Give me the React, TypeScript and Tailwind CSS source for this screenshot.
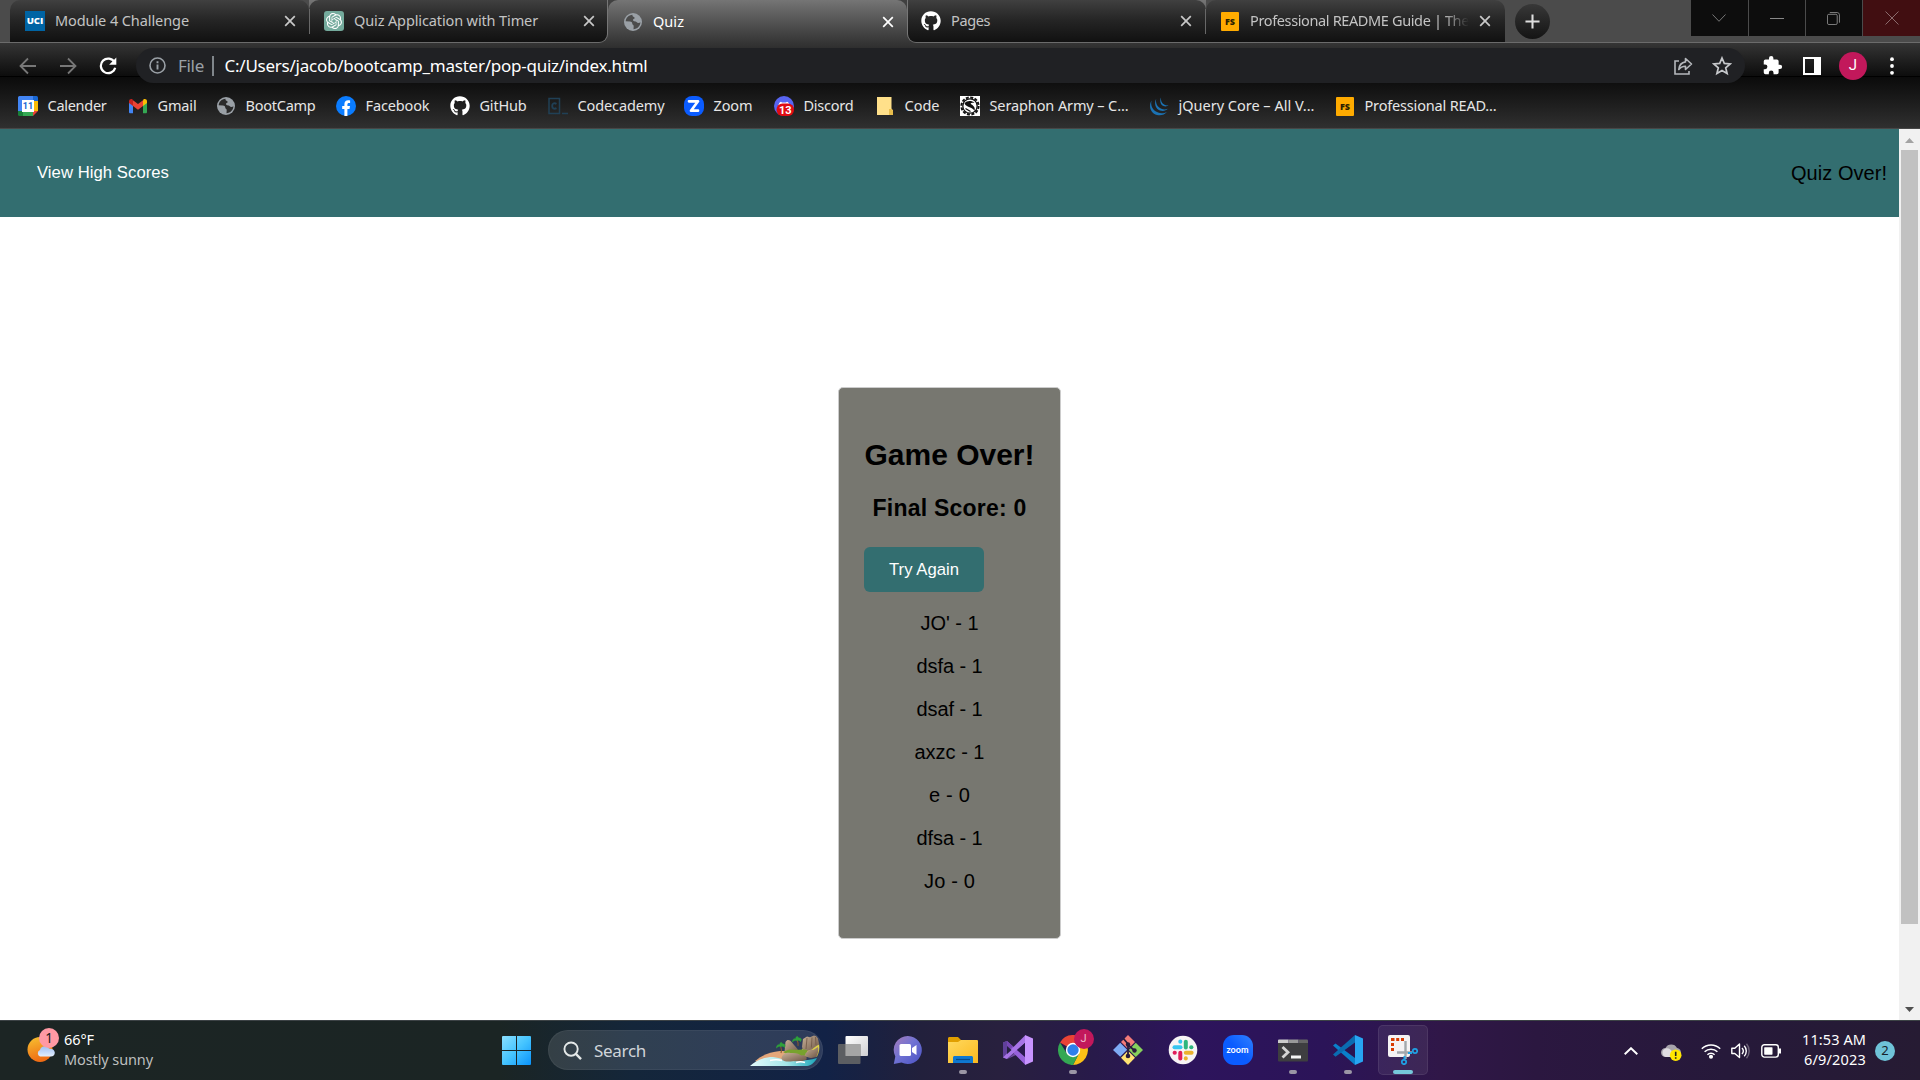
import React, { useLayoutEffect, useRef, useState } from "react";
import { FaGithub } from "react-icons/fa";
import { SiOpenai } from "react-icons/si";

/* Single line of text whose tracking is adjusted so that it spans `w` pixels. */
function Fit({ w, className = "", children }: { w: number; className?: string; children: string }) {
  const ref = useRef<HTMLSpanElement>(null);
  const [spacing, setSpacing] = useState(0);
  useLayoutEffect(() => {
    if (ref.current) {
      const natural = ref.current.getBoundingClientRect().width;
      setSpacing((w - natural) / children.length);
    }
  }, [w, children]);
  return (
    <span ref={ref} className={`inline-block shrink-0 whitespace-nowrap ${className}`} style={{ letterSpacing: spacing }}>
      {children}
    </span>
  );
}

/* ---------- Favicons ---------- */

const Globe = ({ land = "#2b2b2b" }: { land?: string }) => (
  <svg viewBox="0 0 20 20" className="h-5 w-5 shrink-0">
    <circle cx="10" cy="10" r="9" fill="#9aa0a6" />
    <path d="M9.500 2.700C5.500 2.900 2.800 6 2.700 9.300L7 9.500c1.300 0 2.200.8 2.300 2.200.1 1.200 1.300 1 1.400 2.300l-.2 3.300c3.800-.2 6.800-3.300 6.900-7-1.200.9-3 .8-3.900-.3-.7-.8-2-.3-2.900-1-.9-.8-.6-2 .5-2.300 1.300-.3.400-1.700-.6-2-.8-.3-1.200-1-1-2z" fill={land} />
  </svg>
);

const Uci = () => (
  <div className="flex h-5 w-5 shrink-0 items-center justify-center bg-[#0064a4] font-['Open_Sans',sans-serif] text-[9.500px] font-extrabold leading-none text-white">UCI</div>
);

const OpenAi = () => (
  <div className="flex h-5 w-5 shrink-0 items-center justify-center rounded-[3px] bg-[#74aa9c] text-white">
    <SiOpenai size={16} />
  </div>
);

const Octo = () => <FaGithub className="h-5 w-5 shrink-0 text-white" />;

const Fs = () => (
  <div className="flex h-5 w-5 shrink-0 items-center justify-center">
    <div className="flex h-[19px] w-[18px] items-center justify-center rounded-[1px] bg-[#ffab00] font-['Open_Sans',sans-serif] text-[9px] font-extrabold leading-none text-[#2b2100]">FS</div>
  </div>
);

const Calendar = () => (
  <svg viewBox="0 0 20 20" className="h-5 w-5 shrink-0">
    <path d="M1.500 0H15v5H5v10H0V1.500A1.500 1.500 0 0 1 1.500 0z" fill="#4285f4" />
    <path d="M15 0h3.500A1.500 1.500 0 0 1 20 1.500V5h-5z" fill="#1967d2" />
    <path d="M15 5h5v10h-5z" fill="#fbbc04" />
    <path d="M5 15h10v5H5z" fill="#34a853" />
    <path d="M0 15h5v5H1.500A1.500 1.500 0 0 1 0 18.500z" fill="#188038" />
    <path d="M15 15h5l-5 5z" fill="#ea4335" />
    <path d="M4 4H16V16H4z" fill="#fff" />
    <text x="10" y="13.400" textAnchor="middle" fontSize="9" fontWeight="700" fontFamily="Roboto" fill="#1967d2">11</text>
  </svg>
);

const Gmail = () => (
  <svg viewBox="0 0 20 20" className="h-5 w-5 shrink-0">
    <path d="M1 5v11c0 .8.500 1.300 1.300 1.300H5V8z" fill="#4285f4" />
    <path d="M19 5v11c0 .8-.5 1.300-1.300 1.300H15V8z" fill="#34a853" />
    <path d="M15 4.600V10l4-3V5.200c0-1.900-2.100-2.900-3.600-1.800z" fill="#fbbc04" />
    <path d="M5 4.600V10l-4-3V5.200c0-1.900 2.100-2.900 3.600-1.800z" fill="#c5221f" />
    <path d="M5 10V4.300L10 8l5-3.700V10l-5 3.800z" fill="#ea4335" />
  </svg>
);

const Facebook = () => (
  <svg viewBox="0 0 20 20" className="h-5 w-5 shrink-0">
    <circle cx="10" cy="10" r="10" fill="#0a7cff" />
    <path d="M8.400 20v-6.900H6.200v-3h2.200V8.300c0-2.700 1.500-4.100 3.700-4.100.7 0 1.500.1 2 .2v2.500h-1.200c-1.100 0-1.500.7-1.500 1.400v1.800h2.600l-.5 3h-2.100V20z" fill="#fff" />
  </svg>
);

const Codecademy = () => (
  <svg viewBox="0 0 20 20" className="h-5 w-5 shrink-0" fill="none" stroke="#204056" strokeWidth="1.500">
    <path d="M1 2.500h10.500v15H1z" />
    <path d="M8.500 7.800c-2.600-1.400-4.300 0-4.300 2.200s1.700 3.600 4.300 2.200" strokeWidth="1.900" />
    <path d="M14 17.500h6" />
  </svg>
);

const ZoomZ = () => (
  <svg viewBox="0 0 20 20" className="h-5 w-5 shrink-0">
    <rect width="20" height="20" rx="8" fill="#0b5cff" />
    <path d="M5.500 5.300h9L7.500 14.700h7" transform="translate(-.5 0)" fill="none" stroke="#fff" strokeWidth="2.700" strokeLinejoin="round" strokeLinecap="round" />
  </svg>
);

const Discord = () => (
  <svg viewBox="0 0 20 20" className="h-5 w-5 shrink-0">
    <circle cx="10" cy="10" r="10" fill="#5865f2" />
    <path d="M4 12c.3-3.500 1.500-6 3-6.200l1 .8h4l1-.8c1.500.2 2.700 2.700 3 6.200z" fill="#fff" />
    <rect x="2.500" y="7.500" width="17.500" height="12.500" rx="6" fill="#e00b12" />
    <text x="11.300" y="17.800" textAnchor="middle" fontSize="11" fontWeight="700" fontFamily="Roboto" fill="#fff">13</text>
  </svg>
);

const CodeFolder = () => (
  <svg viewBox="0 0 20 20" className="h-5 w-5 shrink-0">
    <path d="M2 1h14.500v11.500l1.500 2V19H2z" fill="#ffe08a" />
    <path d="M14 13h2.500l1.500 1.500V19h-4z" fill="#e8bd4c" />
  </svg>
);

const Seraphon = () => (
  <svg viewBox="0 0 20 20" className="h-5 w-5 shrink-0">
    <path d="M0 0h20v20H0z" fill="#fff" />
    <circle cx="10" cy="10" r="8.600" fill="none" stroke="#111" strokeWidth="2" strokeDasharray="3 1.500" />
    <circle cx="10" cy="10" r="7.200" fill="none" stroke="#111" strokeWidth="1.300" />
    <path d="M4.500 7.500C7 4.300 12 4.500 14.500 7c-3-.8-5 0-3 1.500 2.500 1.500 4 3.500 3 6.500-2-3.500-5-3-9-6z" fill="#111" />
    <path d="M5.500 12.500l5 3" stroke="#111" strokeWidth="1.300" />
  </svg>
);

const JQuery = () => (
  <svg viewBox="0 0 20 20" className="h-5 w-5 shrink-0" fill="#1b72b3">
    <path d="M2.600 4.500C-.8 10 1.500 17.300 8 19c4 1 7.800-.4 10-3.300-2.700 1.600-5.900 2-8.900.9C3.500 14.600 1.200 9.500 2.600 4.500z" />
    <path d="M7.200 2.800C4.800 7.500 6.500 13 11 14.500c3 1 6 .2 7.800-1.700-2 .8-4.300.9-6.400 0C8.300 11 6.300 7 7.200 2.800z" />
    <path d="M12 1.600c-1.600 3.400-.5 7.400 2.500 8.500 2 .8 3.800.3 5-.8-1.300.3-2.800.2-4-.5-2.700-1.400-4-4.200-3.500-7.200z" />
  </svg>
);

/* ---------- Browser chrome ---------- */

const Cross = ({ active = false }: { active?: boolean }) => (
  <svg viewBox="0 0 12 12" className={`h-3 w-3 shrink-0 ${active ? "text-white" : "text-[#c8c8c8]"}`} stroke="currentColor" strokeWidth="1.700">
    <path d="M1.200 1.200l9.600 9.600M10.800 1.200l-9.600 9.600" />
  </svg>
);

function TabBody({ icon, title, w, active = false, fade = false }: { icon: React.ReactNode; title: string; w: number; active?: boolean; fade?: boolean }) {
  return (
    <>
      {icon}
      <div className={`mb-[2px] ml-[10px] flex w-[219px] items-center overflow-hidden ${fade ? "[mask-image:linear-gradient(to_right,#000_88%,transparent)]" : ""}`}>
        <Fit w={w} className={`text-[14.500px] leading-5 ${active ? "text-white" : "text-[#c3c3c3]"}`}>{title}</Fit>
      </div>
      <div className="ml-[10px]"><Cross active={active} /></div>
    </>
  );
}

const darkTab = "border-b border-b-[#6b6b6b] bg-linear-to-b from-[#404040] via-[#242424] to-[#111]";
const activeFill = "bg-linear-to-b from-[#757575] to-[#353535]";

function TabStrip() {
  return (
    <div className="flex h-[43px] w-full bg-[#4b4b4b]">
      <div className="h-[43px] w-[10px] border-b border-[#6b6b6b]" />
      <div className={`flex h-[43px] w-[299px] items-center rounded-t-[10px] pl-[15px] ${darkTab}`}>
        <TabBody icon={<Uci />} title="Module 4 Challenge" w={134} />
      </div>
      <div className={`flex h-[43px] w-[299px] ${activeFill}`}>
        <div className={`flex h-[43px] w-[299px] items-center rounded-tl-[10px] rounded-br-[9px] border-r border-r-[#777] ${darkTab}`}>
          <div className="mr-[14px] h-[25px] w-px shrink-0 bg-[#686868]" />
          <TabBody icon={<OpenAi />} title="Quiz Application with Timer" w={184} />
        </div>
      </div>
      <div className="h-[43px] w-[299px] bg-[#404040]">
        <div className={`flex h-[43px] w-[299px] items-center rounded-t-[10px] pl-[15px] ${activeFill}`}>
          <TabBody icon={<Globe land="#4c4c4c" />} title="Quiz" w={31} active />
        </div>
      </div>
      <div className={`flex h-[43px] w-[299px] ${activeFill}`}>
        <div className={`flex h-[43px] w-[299px] items-center rounded-tr-[10px] rounded-bl-[9px] border-l border-l-[#777] pl-[13px] ${darkTab}`}>
          <TabBody icon={<Octo />} title="Pages" w={39} />
          <div className="ml-auto h-[25px] w-px shrink-0 bg-[#686868]" />
        </div>
      </div>
      <div className={`flex h-[43px] w-[299px] items-center rounded-t-[10px] pl-[14px] ${darkTab}`}>
        <TabBody icon={<Fs />} title="Professional README Guide | The" w={219} fade />
      </div>
      <div className="flex h-[43px] flex-1 items-start border-b border-[#6b6b6b]">
        <div className="mt-1 ml-[9.500px] flex h-[35px] w-[35px] items-center justify-center rounded-full bg-linear-to-b from-[#383838] to-[#141414]">
          <svg viewBox="0 0 16 16" className="h-[15px] w-[15px]" stroke="#ddd" strokeWidth="2.200"><path d="M8 .5v15M.5 8h15" /></svg>
        </div>
        <div className="ml-auto flex h-9 w-[229px] gap-px">
          <div className="flex w-[57px] items-center justify-center bg-[#0d0d0d]">
            <svg viewBox="0 0 14 8" className="h-2 w-[14px]" fill="none" stroke="#777"><path d="M.5.500L7 7.300 13.500.500" /></svg>
          </div>
          <div className="flex w-[56px] items-center justify-center bg-[#0d0d0d]">
            <div className="h-px w-[14px] bg-[#888]" />
          </div>
          <div className="flex w-[57px] items-center justify-center bg-[#0d0d0d]">
            <svg viewBox="0 0 14 14" className="h-[13px] w-[13px]" fill="none" stroke="#888"><rect x=".5" y="2.500" width="10.500" height="11" rx="1.500" /><path d="M3 .6h8A2.500 2.500 0 0 1 13.400 3v8.500" /></svg>
          </div>
          <div className="flex w-[57px] items-center justify-center bg-[#410e11]">
            <svg viewBox="0 0 14 14" className="h-[14px] w-[14px]" stroke="#8b6b6d"><path d="M.5.500l13 13M13.500.500l-13 13" /></svg>
          </div>
        </div>
      </div>
    </div>
  );
}

function Toolbar() {
  return (
    <div className="relative z-10 flex h-[34px] w-full items-start bg-linear-to-b from-[#353535] to-[#0c0c0c] shadow-[inset_0_-1px_0_#000]">
      <div className="flex h-[45px] w-[136px] items-center pl-[19px]">
        <svg viewBox="0 0 18 18" className="h-[18px] w-[18px]" fill="none" stroke="#777" strokeWidth="1.800"><path d="M17 9H1.800M9 1.500L1.500 9 9 16.500" /></svg>
        <svg viewBox="0 0 18 18" className="ml-[22px] h-[18px] w-[18px]" fill="none" stroke="#777" strokeWidth="1.800"><path d="M1 9h15.200M9 1.500L16.500 9 9 16.500" /></svg>
        <svg viewBox="0 0 18 18" className="ml-[22px] h-[18px] w-[18px]" fill="none" stroke="#fff" strokeWidth="2.200"><path d="M15.500 5.200A7.300 7.300 0 1 0 16.200 10.800" /><path d="M17.300.5v7.200h-7.200z" fill="#fff" stroke="none" /></svg>
      </div>
      <div className="mt-[5px] flex h-[35px] w-[1609px] shrink-0 items-center rounded-full bg-[#202124] pl-[13px]">
        <svg viewBox="0 0 17 17" className="h-[17px] w-[17px]" fill="none" stroke="#9aa0a6" strokeWidth="1.600"><circle cx="8.500" cy="8.500" r="7.500" /><path d="M8.500 7.500v5M8.500 4.300v1.900" strokeWidth="1.900" /></svg>
        <Fit w={26} className="ml-3 text-[17px] leading-5 text-[#9aa0a6]">File</Fit>
        <div className="ml-2 h-5 w-[1.500px] bg-[#80868b]" />
        <Fit w={423} className="ml-[11px] text-[17px] leading-5 text-white">C:/Users/jacob/bootcamp_master/pop-quiz/index.html</Fit>
        <svg viewBox="0 0 20 20" className="ml-auto h-5 w-5" fill="none" stroke="#b5b8bc" strokeWidth="1.600"><path d="M6 5H2v13h14v-3" /><path d="M12.500 2.500L18.500 8l-6 5.500v-3.300c-3 0-5 .9-6.700 3.300.4-4.200 2.900-7 6.700-7.600z" strokeLinejoin="round" /></svg>
        <svg viewBox="0 0 20 20" className="mr-[13px] ml-[19px] h-5 w-5" fill="none" stroke="#c6c8cb" strokeWidth="1.700"><path d="M10 2l2.300 5.400 5.900.5-4.500 3.900 1.400 5.700L10 14.400l-5.100 3.100 1.400-5.700-4.500-3.900 5.900-.5z" /></svg>
      </div>
      <div className="flex h-[45px] items-center">
        <svg viewBox="0 0 24 24" className="ml-[17px] h-[21px] w-[21px]" fill="#fff"><path d="M20.500 11H19V7a2 2 0 0 0-2-2h-4V3.500a2.500 2.500 0 0 0-5 0V5H4a2 2 0 0 0-2 2v3.800h1.500a2.700 2.700 0 0 1 0 5.400H2V20a2 2 0 0 0 2 2h3.800v-1.500a2.700 2.700 0 0 1 5.400 0V22H17a2 2 0 0 0 2-2v-4h1.500a2.500 2.500 0 0 0 0-5z" /></svg>
        <div className="ml-[20px] h-[18px] w-[18px] border-[2.500px] border-r-[7px] border-white" />
        <div className="ml-[18px] flex h-7 w-7 items-center justify-center rounded-full bg-[#c2185b] font-[Roboto,sans-serif] text-[15px] text-white">J</div>
        <svg viewBox="0 0 4 18" className="ml-[23px] h-[18px] w-1" fill="#fff"><circle cx="2" cy="2.200" r="1.900" /><circle cx="2" cy="9" r="1.900" /><circle cx="2" cy="15.800" r="1.900" /></svg>
      </div>
    </div>
  );
}

function Bookmark({ icon, label, w, className }: { icon: React.ReactNode; label: string; w: number; className: string }) {
  return (
    <div className={`flex shrink-0 items-center gap-[9.500px] ${className}`}>
      {icon}
      <Fit w={w} className="mb-[2px] text-[14.500px] leading-5 text-[#e6e6e6]">{label}</Fit>
    </div>
  );
}

function Bookmarks() {
  return (
    <div className="flex h-[52px] w-full items-start border-b border-[#474747] bg-linear-to-b from-[#0b0b0b] to-[#303030] pt-[18px] pl-[18px]">
      <Bookmark icon={<Calendar />} label="Calender" w={59} className="w-[110px]" />
      <Bookmark icon={<Gmail />} label="Gmail" w={39} className="w-[88px]" />
      <Bookmark icon={<Globe />} label="BootCamp" w={70} className="w-[120px]" />
      <Bookmark icon={<Facebook />} label="Facebook" w={64} className="w-[114px]" />
      <Bookmark icon={<Octo />} label="GitHub" w={47} className="w-[98px]" />
      <Bookmark icon={<Codecademy />} label="Codecademy" w={87} className="w-[136px]" />
      <Bookmark icon={<ZoomZ />} label="Zoom" w={39} className="w-[90px]" />
      <Bookmark icon={<Discord />} label="Discord" w={50} className="w-[101px]" />
      <Bookmark icon={<CodeFolder />} label="Code" w={35} className="w-[85px]" />
      <Bookmark icon={<Seraphon />} label="Seraphon Army – C..." w={139} className="w-[189px]" />
      <Bookmark icon={<JQuery />} label="jQuery Core – All V..." w={136} className="w-[186px]" />
      <Bookmark icon={<Fs />} label="Professional READ..." w={132} className="w-[170px]" />
    </div>
  );
}

/* ---------- Quiz page ---------- */

const scores = ["JO' - 1", "dsfa - 1", "dsaf - 1", "axzc - 1", "e - 0", "dfsa - 1", "Jo - 0"];
const widths = [58, 66, 66, 70, 41, 66, 51];

function QuizPage() {
  return (
    <div className="flex h-[891px] w-full bg-white font-['Liberation_Sans',Arial,sans-serif] text-black">
      <div className="flex w-[1899px] flex-col">
        <div className="flex h-[88px] items-center justify-between bg-[#336e70] pr-3 pl-[37px]">
          <Fit w={132} className="text-[16.670px] leading-5 text-white">View High Scores</Fit>
          <Fit w={96} className="text-[20px] leading-6">Quiz Over!</Fit>
        </div>
        <div className="mt-[170px] ml-[838px] flex h-[552px] w-[223px] flex-col items-center rounded-[5px] border border-[#ccc] bg-[#777770]">
          <Fit w={170} className="mt-[49px] text-[30px] leading-9 font-bold">Game Over!</Fit>
          <Fit w={154} className="mt-[21px] text-[23px] leading-7 font-bold">Final Score: 0</Fit>
          <div className="mt-[25px] ml-[25px] flex h-[45px] w-[120px] items-center justify-center self-start rounded-md bg-[#336e70] text-white">
            <Fit w={70} className="text-[16.670px] leading-5">Try Again</Fit>
          </div>
          <div className="mt-[9px] flex flex-col items-center">
            {scores.map((s, i) => (
              <div key={s} className="flex h-[43px] items-center">
                <Fit w={widths[i]} className="text-[20px] leading-6">{s}</Fit>
              </div>
            ))}
          </div>
        </div>
      </div>
      <div className="flex w-[21px] flex-col items-center bg-[#f1f1f1]">
        <svg viewBox="0 0 9 5" className="mt-[9px] h-[5px] w-[9px]" fill="#a3a3a3"><path d="M4.500 0L9 5H0z" /></svg>
        <div className="mt-[7px] h-[774px] w-[17px] bg-[#c1c1c1]" />
        <svg viewBox="0 0 9 5" className="mt-auto mb-[8px] h-[5px] w-[9px]" fill="#505050"><path d="M4.500 5L9 0H0z" /></svg>
      </div>
    </div>
  );
}

/* ---------- Taskbar ---------- */

const Weather = () => (
  <svg viewBox="0 0 34 36" className="h-9 w-[34px] shrink-0">
    <defs>
      <linearGradient id="sun" x1="0" y1="0" x2=".3" y2="1"><stop offset="0" stopColor="#f7c331" /><stop offset="1" stopColor="#ef6c14" /></linearGradient>
      <linearGradient id="cl" x1="0" y1="0" x2="0" y2="1"><stop offset="0" stopColor="#9fc0f5" /><stop offset="1" stopColor="#e3edfc" /></linearGradient>
    </defs>
    <circle cx="15" cy="22.500" r="12.500" fill="url(#sun)" />
    <path d="M15 29.500a3.500 3.500 0 0 1 0-6.500 5 5 0 0 1 9-1.500c4 .2 5.800 2 5.800 4.200 0 2.300-1.500 3.800-4 3.800z" fill="url(#cl)" />
    <circle cx="24" cy="11" r="10" fill="#ff99a4" />
    <text x="24" y="15.800" textAnchor="middle" fontSize="13.500" fontFamily="Noto Sans" fill="#1a1a1a">1</text>
  </svg>
);

const Windows = () => (
  <svg viewBox="0 0 29 29" className="h-[29px] w-[29px] shrink-0">
    <defs><linearGradient id="win" x1="0" y1="0" x2="29" y2="29" gradientUnits="userSpaceOnUse"><stop offset="0" stopColor="#8be0ff" /><stop offset=".5" stopColor="#45c4ff" /><stop offset="1" stopColor="#0a93fb" /></linearGradient></defs>
    <path d="M0 1a1 1 0 0 1 1-1h13v14H0zM15 0h13a1 1 0 0 1 1 1v13H15zM0 15h14v14H1a1 1 0 0 1-1-1zM15 15h14v13a1 1 0 0 1-1 1H15z" fill="url(#win)" />
  </svg>
);

const Island = () => (
  <svg viewBox="0 0 70 32" className="h-8 w-[70px] shrink-0">
    <defs>
      <linearGradient id="sea" x1="0" y1="0" x2="1" y2="0"><stop offset="0" stopColor="#e5fbfb" /><stop offset=".55" stopColor="#a5e6ea" /><stop offset="1" stopColor="#1aa4b8" /></linearGradient>
      <linearGradient id="rock" x1="0" y1="0" x2="1" y2="1"><stop offset="0" stopColor="#c9b197" /><stop offset="1" stopColor="#6b5445" /></linearGradient>
    </defs>
    <path d="M5 26C12 20 20 17 30 16h20v12H10z" fill="#e4a77b" />
    <path d="M0 31c6-6 15-9 23-9 9 1 14 5 24 4 8-1 14-1 20-3-2 4-6 8-10 8z" fill="url(#sea)" />
    <path d="M50 17c4-6 12-9 19-8.500 1 5 0 9-2 13H54z" fill="#ddd04a" />
    <path d="M52 12l1-8 4-2.500 3 .7 4-1.700 3.500 1 1.800 8c-3 1-5 3-7.300 5L54 17z" fill="url(#rock)" />
    <path d="M57 3l-1 11M62 2.500l-.6 10M65.500 2l.5 8" stroke="#6f5745" strokeWidth=".8" fill="none" />
    <path d="M34.500 17l1-10c1.500-3 4.500-2.500 6 0l6 7 1 3-5 3z" fill="url(#rock)" />
    <path d="M33 17c3-1 5-3 9-2.500 6 1 9-1 15 .5l1 5-14 3z" fill="#78a22d" />
    <path d="M55 20c1-4 6-6 8-5l5-3c1 4-.5 8-2 10-3 1-8 2-11-2z" fill="url(#rock)" />
    <path d="M31.500 24c0-4 4-7 9-6 6-.5 9 1 11 2.500 3-1 6 1 5 4-4 2-9 2-13 1.500-5 1-10 1-12-2z" fill="url(#rock)" />
    <path d="M31 18c.8-2 .8-4-.5-7M48 11c.8-2 0-4-1-6" stroke="#855a2d" strokeWidth="1.100" fill="none" />
    <path d="M26.500 13c0-3 2-4 3.500-3-.5-3 2-3 2.500-1 3-.2 2.800 2 2 3.500-1.500-1.500-2-1.500-3.500-1-1.500-.6-3.200 0-4.500 1.500zM42.500 7c0-3 2-4 3.500-3-.6-3 2-3 2.500-1 3.500-.2 3.200 2 2 3.500-1.500-1.500-2-1.500-3.500-1-1.500-.6-3.200 0-4.500 1.500z" fill="#2fa23d" stroke="#2fa23d" strokeWidth=".6" />
    <path d="M20 25.500c4-1 8-1 12 0M46 27.500c3-1 6-1 9 0" stroke="#fff" strokeWidth="1.700" fill="none" />
  </svg>
);

const TaskView = () => (
  <svg viewBox="0 0 30 30" className="h-[30px] w-[30px]">
    <defs><linearGradient id="tv" x1="0" y1="0" x2="1" y2="1"><stop offset="0" stopColor="#fff" /><stop offset="1" stopColor="#cfcfd2" /></linearGradient></defs>
    <rect x="7.500" y="1" width="22.500" height="20" rx="1" fill="url(#tv)" />
    <rect x="0" y="9" width="22.500" height="20" rx="1" fill="#666" fillOpacity=".88" />
    <path d="M7.500 9h15v12h-15z" fill="#a5a5a5" />
  </svg>
);

const Chat = () => (
  <svg viewBox="0 0 30 30" className="h-[30px] w-[30px]">
    <defs><linearGradient id="ch" x1="0" y1="0" x2="1" y2="1"><stop offset="0" stopColor="#a77bb8" /><stop offset=".45" stopColor="#7173d3" /><stop offset="1" stopColor="#4a52c4" /></linearGradient></defs>
    <path d="M15 1a14 14 0 1 1-6.500 26.500L.8 29l1.500-7.500A14 14 0 0 1 15 1z" fill="url(#ch)" />
    <rect x="6.500" y="9" width="11.500" height="12" rx="1.500" fill="#fff" />
    <path d="M19 13l4.500-3v10L19 17z" fill="#fff" />
  </svg>
);

const Explorer = () => (
  <svg viewBox="0 0 30 30" className="h-[30px] w-[30px]">
    <defs><linearGradient id="fo" x1="0" y1="0" x2="1" y2="1"><stop offset="0" stopColor="#ffd95e" /><stop offset="1" stopColor="#fbb91f" /></linearGradient></defs>
    <path d="M0 3.500C0 2.600.6 2 1.500 2H10l3 3h15.500c.9 0 1.500.6 1.500 1.500V12H0z" fill="#e19f00" />
    <path d="M0 7h10l3-2h15.500c.9 0 1.500.6 1.500 1.500V28H0z" fill="url(#fo)" />
    <path d="M5 28v-5.500C5 21.500 5.800 21 6.800 21h16.400c1 0 1.800.5 1.800 1.500V28z" fill="#0f78d0" />
    <path d="M8 24.500h14" stroke="#064a8c" strokeWidth="1.200" />
  </svg>
);

const VisualStudio = () => (
  <svg viewBox="0 0 30 30" className="h-[30px] w-[30px]">
    <path d="M0 7.500L4 6l18 16v7.500z" fill="#8a55cd" />
    <path d="M0 7.500L4 6v18l-4-1.500z" fill="#60409a" />
    <path d="M4 24L22 8V.5L0 22.500z" fill="#a774e6" />
    <path d="M4 6l6 5.500L4.500 16z" fill="#7546b2" />
    <path d="M4.500 24L16 13.500 22 20v9.500L13 20z" fill="#a06be2" fillOpacity=".6" />
    <path d="M22 0l8 3.500v23L22 30z" fill="#c894ff" />
    <path d="M22 8v14l-8-7z" fill="#29194d" />
    <path d="M4 11v8l4.500-4z" fill="#25203f" />
  </svg>
);

const Chrome = () => (
  <svg viewBox="0 0 30 30" className="h-[30px] w-[30px]">
    <path d="M15 15L2 7.500A15 15 0 0 1 28 7.500z" fill="#ea4335" />
    <path d="M15 8.200h13.300A15 15 0 0 1 15 30l6-11.500z" fill="#fbc116" />
    <path d="M2 7.500l6.900 11L15 22l-.7 8A15 15 0 0 1 2 7.500z" fill="#34a853" />
    <path d="M9 18.500L15 22l5.900-3.500L15 30a15 15 0 0 1-2-.1z" fill="#34a853" />
    <circle cx="15" cy="15" r="7.200" fill="#fff" />
    <circle cx="15" cy="15" r="5.700" fill="#2f7fea" />
  </svg>
);

const Git = () => (
  <svg viewBox="0 0 30 30" className="h-[30px] w-[30px]">
    <path d="M15 0l7 7-7 7-7-7z" fill="#f37b79" />
    <path d="M7.200 7.800l7 7-7 7L0 15z" fill="#7eabf5" />
    <path d="M22.800 7.800L30 15l-7.200 7-7-7z" fill="#86d15c" />
    <path d="M15 15.800l7 7-7 7.200-7-7.200z" fill="#ffe272" />
    <path d="M10 3l5 6v12M15 10l6.500 5.500" stroke="#281b3c" strokeWidth="1.800" fill="none" />
    <circle cx="15" cy="9.500" r="2.200" fill="#281b3c" /><circle cx="15" cy="21" r="2.300" fill="#281b3c" /><circle cx="21.500" cy="15.500" r="2.200" fill="#281b3c" />
  </svg>
);

const Slack = () => (
  <svg viewBox="0 0 30 30" className="h-[30px] w-[30px]">
    <circle cx="15" cy="15" r="14.300" fill="#f7f4f5" />
    <g strokeWidth="4" strokeLinecap="round" fill="none">
      <path d="M6.500 12.200h6" stroke="#36c5f0" /><path d="M12.300 6.600v.2" stroke="#36c5f0" />
      <path d="M17.800 6.700v5.800" stroke="#2eb67d" /><path d="M23.400 12.200h-.2" stroke="#2eb67d" />
      <path d="M17.800 17.700h5.800" stroke="#ecb22e" /><path d="M17.800 23.400v-.2" stroke="#ecb22e" />
      <path d="M12.300 17.700v5.700" stroke="#e01e5a" /><path d="M6.600 17.700h.2" stroke="#e01e5a" />
    </g>
  </svg>
);

const ZoomApp = () => (
  <div className="flex h-[30px] w-[30px] items-center justify-center rounded-[11px] bg-linear-to-bl from-[#2f80ff] via-[#0b5cff] to-[#0b5cff] pb-[2px] font-[Lato,sans-serif] text-[9px] leading-none font-bold text-white">zoom</div>
);

const Terminal = () => (
  <svg viewBox="0 0 30 30" className="h-[30px] w-[30px]">
    <path d="M0 8h30v17.500a1 1 0 0 1-1 1H1a1 1 0 0 1-1-1z" fill="#3e3e40" />
    <path d="M0 5.500a1 1 0 0 1 1-1h9.500V8H0z" fill="#ccc" /><path d="M10.500 4.500h10V8h-10z" fill="#999" /><path d="M20.500 4.500H29a1 1 0 0 1 1 1V8h-9.500z" fill="#666" />
    <path d="M4.500 12l5.500 5.300-5.500 5.300" stroke="#d4d4d4" strokeWidth="2.800" fill="none" />
    <path d="M13 22h10" stroke="#f4f4f4" strokeWidth="3" />
  </svg>
);

const VsCode = () => (
  <svg viewBox="0 0 30 30" className="h-[30px] w-[30px]">
    <path d="M0 10.500l2.500-2L22 23v7z" fill="#0a80ca" />
    <path d="M0 19.500l2.500 2.300L22 7.500V0z" fill="#0a6cb1" />
    <path d="M22 0l8 3.500v23L22 30z" fill="#27a5f2" />
    <path d="M22 8v14l-9.500-7z" fill="#2a1550" />
  </svg>
);

const Snip = () => (
  <svg viewBox="0 0 30 30" className="h-[30px] w-[30px]">
    <rect width="22" height="22" rx="2" fill="#f5f3f4" />
    <g fill="#d83b01">
      <path d="M3 3h3.500v3H3zM8.200 3h3v3h-3zM13 3h3v3h-3zM3 8h3v3H3zM3 13h3v3H3z" />
    </g>
    <path d="M17.500 6v18M9 17.500h15" stroke="#a3a8ac" strokeWidth="2.400" />
    <path d="M16.500 21v3.500M20 18h4" stroke="#1fa3e6" strokeWidth="2" />
    <circle cx="16" cy="27" r="2.200" fill="none" stroke="#1fa3e6" strokeWidth="1.700" />
    <circle cx="27" cy="16" r="2.200" fill="none" stroke="#1fa3e6" strokeWidth="1.700" />
  </svg>
);

function TaskbarItem({ children, running = false }: { children: React.ReactNode; running?: boolean }) {
  return (
    <div className="flex h-[54px] w-[55px] shrink-0 flex-col items-center pt-[14px]">
      {children}
      {running && <div className="mt-[5px] h-1 w-2 rounded-full bg-[#9b96a5]" />}
    </div>
  );
}

function Taskbar() {
  return (
    <div className="flex h-[60px] w-full items-start border-t border-[#3c4245] bg-[linear-gradient(90deg,#1c2524_0%,#1b2524_26%,#14263a_33%,#122246_43%,#22203c_48%,#28203e_52%,#281a4a_57%,#2d145c_62%,#2b1458_69%,#301748_75%,#2b1740_80%,#26193a_90%,#261b33_100%)]">
      <div className="flex h-[59px] w-[502px] items-start pt-[6px] pl-[25px]">
        <Weather />
        <div className="mt-[2px] ml-[5px] flex flex-col items-start">
          <Fit w={30} className="text-[14.500px] leading-5 text-white">66°F</Fit>
          <Fit w={89} className="text-[14.500px] leading-5 text-[#bcbfbf]">Mostly sunny</Fit>
        </div>
      </div>
      <div className="mt-[15px]"><Windows /></div>
      <div className="mt-[9px] ml-[17px] flex h-10 w-[275px] shrink-0 items-center overflow-hidden rounded-full border border-white/5 bg-white/12 pl-[14px]">
        <svg viewBox="0 0 20 20" className="h-[19px] w-[19px]" fill="none" stroke="#e4e8e8" strokeWidth="2"><circle cx="8.500" cy="8.500" r="7" /><path d="M13.500 13.500l5.500 5.500" strokeWidth="2.500" /></svg>
        <Fit w={52} className="mt-px ml-3 text-[17px] leading-5 text-[#d0d5da]">Search</Fit>
        <div className="mr-[2px] ml-auto pt-[2px]"><Island /></div>
      </div>
      <div className="ml-[2px] flex">
        <TaskbarItem><TaskView /></TaskbarItem>
        <TaskbarItem><Chat /></TaskbarItem>
        <TaskbarItem running><Explorer /></TaskbarItem>
        <TaskbarItem><VisualStudio /></TaskbarItem>
        <TaskbarItem running>
          <div className="relative">
            <Chrome />
            <div className="absolute -top-[6px] left-4 flex h-5 w-5 items-center justify-center rounded-full bg-[#c2185b] font-[Roboto,sans-serif] text-[11px] text-[#f0b8cc]">J</div>
          </div>
        </TaskbarItem>
        <TaskbarItem><Git /></TaskbarItem>
        <TaskbarItem><Slack /></TaskbarItem>
        <TaskbarItem><ZoomApp /></TaskbarItem>
        <TaskbarItem running><Terminal /></TaskbarItem>
        <TaskbarItem running><VsCode /></TaskbarItem>
        <div className="mt-1 ml-[3px] flex h-[50px] w-[50px] shrink-0 flex-col items-center rounded-[5px] border border-white/8 bg-white/7 pt-[9px]">
          <div className="flex w-[30px]"><Snip /></div>
          <div className="mt-[5px] h-1 w-5 shrink-0 rounded-full bg-[#76c8da]" />
        </div>
      </div>
      <div className="ml-auto flex h-[59px] items-center pr-[25px]">
        <svg viewBox="0 0 14 8" className="h-2 w-[14px]" fill="none" stroke="#fff" strokeWidth="1.900"><path d="M.7 7.300L7 1.200l6.300 6.100" /></svg>
        <svg viewBox="0 0 21 18" className="mt-[2px] ml-[23px] h-[18px] w-[21px]">
          <path d="M4.500 14a4.500 4.500 0 0 1 0-9A6.500 6.500 0 0 1 16 5c3 .3 4 3 4 5l-6 4z" fill="#a7a3ab" />
          <path d="M4.500 14a4.500 4.500 0 0 1 0-8.500c3-1 5 1 7 3.500v5z" fill="#e0dde2" />
          <circle cx="14.700" cy="12.200" r="5.800" fill="#ffe600" />
          <path d="M14.700 8.800v4.200M14.700 14.200v1.600" stroke="#222" strokeWidth="1.600" />
        </svg>
        <svg viewBox="0 0 20 16" className="ml-[19px] h-4 w-5" fill="none" stroke="#fff" strokeWidth="1.500">
          <path d="M.8 5.800a13 13 0 0 1 18.400 0M3.600 8.800a9 9 0 0 1 12.800 0M6.400 11.700a5 5 0 0 1 7.200 0" /><circle cx="10" cy="13.800" r="1.300" fill="#fff" />
        </svg>
        <svg viewBox="0 0 20 18" className="ml-[10px] h-[18px] w-5" fill="none" stroke="#fff" strokeWidth="1.400">
          <path d="M.8 6.300h3L8.500 2v13.500l-4.700-4h-3z" strokeLinejoin="round" /><path d="M11 6a4.500 4.500 0 0 1 0 6M13.200 3.800a7.500 7.500 0 0 1 0 10.400" /><path d="M15.500 1.800a11 11 0 0 1 0 14.400" stroke="#6d6379" />
        </svg>
        <svg viewBox="0 0 21 14" className="ml-[10px] h-[14px] w-[21px]" fill="none" stroke="#fff" strokeWidth="1.400">
          <rect x=".8" y=".8" width="16.500" height="12.300" rx="2.500" /><rect x="3.200" y="3.200" width="8.300" height="7.500" rx=".6" fill="#fff" stroke="none" /><path d="M19 4.500v5" strokeWidth="2" />
        </svg>
        <div className="mb-[4px] ml-5 flex flex-col items-end">
          <Fit w={64} className="text-[14.500px] leading-5 text-white">11:53 AM</Fit>
          <Fit w={62} className="text-[14.500px] leading-5 text-white">6/9/2023</Fit>
        </div>
        <div className="ml-[9px] flex h-5 w-5 items-center justify-center rounded-full bg-[#6fc3d8] text-[13px] leading-none text-[#17232a]">2</div>
      </div>
    </div>
  );
}

export default function App() {
  return (
    <div className="flex h-[1080px] w-[1920px] flex-col overflow-hidden bg-white font-['Noto_Sans','Open_Sans',sans-serif]">
      <TabStrip />
      <Toolbar />
      <Bookmarks />
      <QuizPage />
      <Taskbar />
    </div>
  );
}
